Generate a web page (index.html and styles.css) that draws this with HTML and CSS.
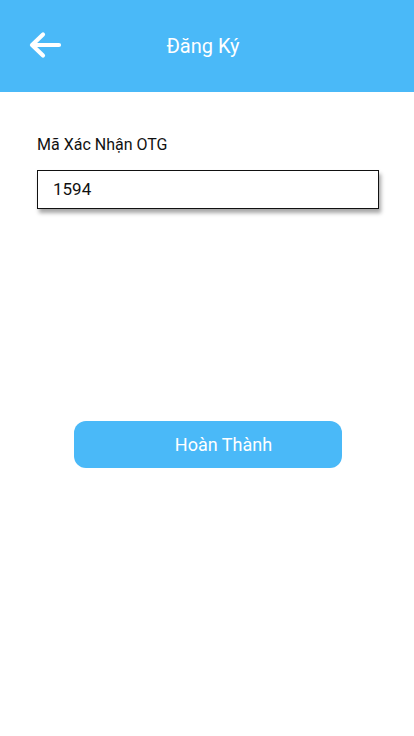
FILE: index.html
```html
<!DOCTYPE html>
<html lang="vi">
<head>
<meta charset="utf-8">
<link rel="stylesheet" href="styles.css">
</head>
<body>
<header class="topbar">
  <button class="back" aria-label="back">
    <svg width="34" height="28" viewBox="0 0 34 28"><path d="M31 14H5M15 3.5L4 14l11 10.5" fill="none" stroke="#fff" stroke-width="4.2" stroke-linecap="round" stroke-linejoin="round"/></svg>
  </button>
  <h1 class="title">Đăng Ký</h1>
</header>
<main class="content">
  <label class="label">Mã Xác Nhận OTG</label>
  <div class="field">1594</div>
  <div class="actions">
    <button class="submit">Hoàn Thành</button>
  </div>
</main>
</body>
</html>
```
FILE: styles.css
```css
* { box-sizing: border-box; }
body { margin: 0; background: #fff; font-family: Roboto, "Noto Sans", sans-serif; }
.topbar {
  height: 92px;
  background: #4ab9f8;
  display: flex;
  align-items: center;
  position: relative;
  padding-left: 28px;
  padding-bottom: 2px;
}
.back { background: none; border: 0; padding: 0; width: 34px; height: 28px; display: flex; }
.title {
  margin: 0;
  font-weight: 400;
  font-size: 20px;
  color: #fff;
  position: absolute;
  left: 0; right: 8px;
  text-align: center;
  top: 34px;
  pointer-events: none;
}
.content { padding: 44px 35px 0 37px; display: flex; flex-direction: column; }
.label { font-size: 16px; color: #111; line-height: 18px; }
.field {
  margin-top: 16px;
  height: 39px;
  border: 1px solid #111;
  box-shadow: 2px 4px 4px rgba(0,0,0,0.35);
  font-size: 17px;
  line-height: 37px;
  padding-left: 15px;
  color: #111;
}
.actions { display: flex; justify-content: center; margin-top: 212px; }
.submit {
  width: 268px;
  height: 47px;
  margin-left: -1px;
  border: 0;
  border-radius: 12px;
  background: #4ab9f8;
  color: #fff;
  font-family: Roboto, sans-serif;
  font-size: 18px;
  padding-left: 38px;
}
```
